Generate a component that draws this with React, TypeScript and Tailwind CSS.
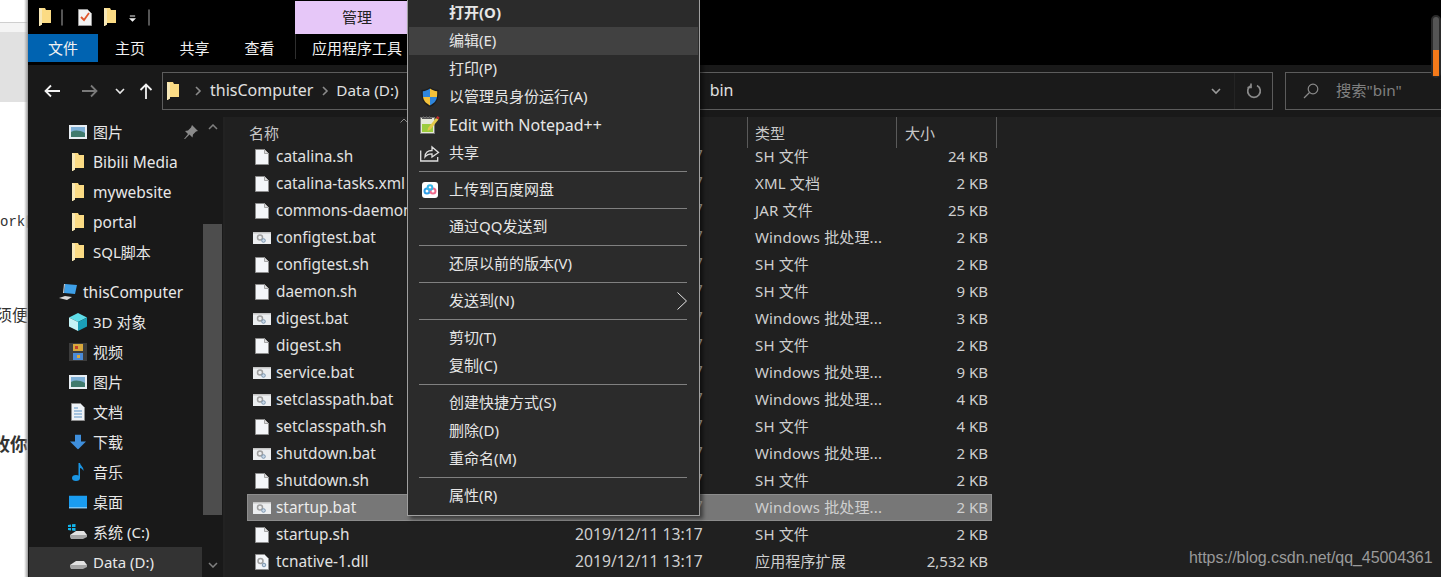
import React from "react";

const FONT = "font-['Noto_Sans','Noto_Sans_CJK_SC',sans-serif]";

function Folder({ className = "" }: { className?: string }) {
	return (
		<svg width="12" height="18" viewBox="0 0 12 18" className={className}>
			<path d="M0 0h6l1 2h5v13H3v1.500L0 18z" fill="#fbdb84" />
			<path d="M0 0l3 1v15.500L.500 18H0z" fill="#f7e8b8" />
		</svg>
	);
}

function Doc() {
	return (
		<svg width="14" height="16" viewBox="0 0 14 16" className="shrink-0">
			<path d="M.500.500h9l4 4v11h-13z" fill="#f4f6f9" stroke="#8d8d8d" />
			<path d="M9.500.500v4h4" fill="#dcdcdc" stroke="#a5a5a5" />
		</svg>
	);
}

function Bat() {
	return (
		<svg width="18" height="12" viewBox="0 0 18 12" className="-ml-px shrink-0">
			<rect width="18" height="12" fill="#eceef0" />
			<rect width="18" height="1.500" fill="#c4c4c4" />
			<circle cx="7" cy="5.500" r="2.500" fill="none" stroke="#a0a0a0" strokeWidth="1.500" />
			<circle cx="10.500" cy="8.500" r="1.800" fill="#c8d8e8" stroke="#7d97b0" />
		</svg>
	);
}

function Dll() {
	return (
		<svg width="14" height="16" viewBox="0 0 14 16" className="shrink-0">
			<path d="M.500.500h9l4 4v11h-13z" fill="#f4f6f9" stroke="#8d8d8d" />
			<circle cx="5.500" cy="7" r="2.500" fill="none" stroke="#a0a0a0" strokeWidth="1.500" />
			<circle cx="9" cy="11" r="1.800" fill="#c8d8e8" stroke="#7d97b0" />
		</svg>
	);
}

function Picture() {
	return (
		<svg width="18" height="14" viewBox="0 0 18 14">
			<rect width="18" height="14" fill="#e8eef4" />
			<rect x="2" y="2" width="14" height="10" fill="#7fb1d8" />
			<path d="M2 7c4-2 8-2 14 1v4H2z" fill="#3f7a6e" />
		</svg>
	);
}

function Film() {
	return (
		<svg width="18" height="18" viewBox="0 0 18 18">
			<rect width="18" height="18" fill="#3c3c3c" />
			<rect x="4" y="1" width="10" height="7" fill="#d8a83c" />
			<rect x="6" y="3" width="3" height="3" fill="#c0402c" />
			<rect x="4" y="10" width="10" height="7" fill="#4a8ad8" />
			<rect x="8" y="12" width="3" height="3" fill="#d8a83c" />
		</svg>
	);
}

function Cube() {
	return (
		<svg width="18" height="18" viewBox="0 0 18 18">
			<path d="M9 0l9 4.500-9 4.500-9-4.500z" fill="#5fdde8" />
			<path d="M0 4.500l9 4.500v9l-9-4.500z" fill="#c5f3f6" />
			<path d="M18 4.500l-9 4.500v9l9-4.500z" fill="#1a9fb8" />
		</svg>
	);
}

function DocList() {
	return (
		<svg width="14" height="18" viewBox="0 0 14 18">
			<path d="M.500.500h9l4 4v13h-13z" fill="#eef2f6" stroke="#8d8d8d" />
			<path d="M3 5h4M3 8h8M3 11h8M3 14h8" stroke="#5b93c7" />
		</svg>
	);
}

function DownArrow() {
	return (
		<svg width="16" height="15" viewBox="0 0 16 15">
			<path d="M5 0h6v7h5l-8 8-8-8h5z" fill="#3f8fdc" />
		</svg>
	);
}

function Note() {
	return (
		<svg width="12" height="18" viewBox="0 0 12 18">
			<ellipse cx="4" cy="15" rx="4" ry="3" fill="#1a96e4" />
			<path d="M6.500 15V0h1.500c.5 3 4 4 3.500 8-1-2-2.500-3-3.500-3v10z" fill="#1a96e4" />
		</svg>
	);
}

function Desktop() {
	return (
		<svg width="18" height="13" viewBox="0 0 18 13">
			<rect width="18" height="13" fill="#1a9cf0" />
			<rect y="12" width="18" height="1" fill="#d9eefc" />
		</svg>
	);
}

function Drive({ win }: { win?: boolean }) {
	return (
		<svg width="20" height="16" viewBox="0 0 20 16">
			<path d="M2 11l6-4h8l3 4-5 3H4z" fill="#e2e2e2" />
			<path d="M2 11h17v2l-4 2H3l-1-2z" fill="#a6a6a6" />
			{win && <path d="M0 1l3-.500V3H0zM4 .300L7.500 0v3H4zM0 4h3v2.500L0 6zM4 4h3.500v3L4 6.500z" fill="#12b4ea" />}
		</svg>
	);
}

function Monitor() {
	return (
		<svg width="20" height="18" viewBox="0 0 20 18">
			<path d="M7 1l12 1-2 9-11-1z" fill="#3ea0e8" />
			<path d="M6 1l1 0-1 9-1 0z" fill="#cfd8e0" />
			<path d="M1 15l6-2 7 1-5 3z" fill="#d9d9d9" />
		</svg>
	);
}

function Shield() {
	return (
		<svg width="18" height="20" viewBox="0 0 18 20">
			<path d="M9 0c2 2 5 3 8.500 3 0 7 0 13-8.500 17C.500 16 .500 10 .500 3 4 3 7 2 9 0z" fill="#1c1c1c" />
			<path d="M9 1.500V10H2c-.2-2 -.2-4-.2-5.800C4.500 4 7 3 9 1.500z" fill="#2f86dc" />
			<path d="M9 1.500c2 1.500 4.500 2.500 7.200 2.700 0 1.800 0 3.800-.2 5.800H9z" fill="#f3c13a" />
			<path d="M2 10h7v8.500C4.500 16 2.600 13.500 2 10z" fill="#f3c13a" />
			<path d="M9 10h7c-.6 3.500-2.500 6-7 8.500z" fill="#2f86dc" />
		</svg>
	);
}

function NotepadPlus() {
	return (
		<svg width="20" height="20" viewBox="0 0 20 20">
			<rect x="0.500" y="2.500" width="14" height="16" fill="#e6e8d8" stroke="#777" />
			<path d="M2 9h11v8H2z" fill="#9ccc3c" />
			<path d="M2 3h1v-2h1v2h2v-2h1v2h2v-2h1v2h2v1H2z" fill="#555" />
			<path d="M8 13l8-10 2.500 1.500-8 10-3 1.500z" fill="#e4c94a" />
			<path d="M16 3l1.500-2 2 1.500-1 2z" fill="#c02c2c" />
		</svg>
	);
}

function ShareIcon() {
	return (
		<svg width="20" height="18" viewBox="0 0 20 18" fill="none" stroke="#e0e0e0" strokeWidth="1.300">
			<path d="M.700 6.500v10.500h17V13" />
			<path d="M5 13c0-4.500 3-6.500 7-6.500V3l6.500 5.500L12 13V9.800c-3 0-5.500 1-7 3.200z" />
		</svg>
	);
}

function Baidu() {
	return (
		<div className="flex h-[16px] w-[16px] items-center justify-center rounded-[3px] bg-white">
			<svg width="14" height="12" viewBox="0 0 14 12" fill="none" strokeWidth="2">
				<circle cx="4" cy="7" r="2.500" stroke="#2f9ee8" />
				<circle cx="10" cy="7" r="2.500" stroke="#f06a8c" />
				<circle cx="7" cy="3.500" r="2.300" stroke="#38b6e8" />
			</svg>
		</div>
	);
}

const NAV: { label: string; icon: React.ReactNode; top?: boolean; active?: boolean; gap?: boolean; pin?: boolean; latin?: boolean }[] = [
	{ label: "图片", icon: <Picture />, pin: true },
	{ label: "Bibili Media", icon: <Folder />, latin: true },
	{ label: "mywebsite", icon: <Folder />, latin: true },
	{ label: "portal", icon: <Folder />, latin: true },
	{ label: "SQL脚本", icon: <Folder /> },
	{ label: "thisComputer", icon: <Monitor />, top: true, gap: true, latin: true },
	{ label: "3D 对象", icon: <Cube /> },
	{ label: "视频", icon: <Film /> },
	{ label: "图片", icon: <Picture /> },
	{ label: "文档", icon: <DocList /> },
	{ label: "下载", icon: <DownArrow /> },
	{ label: "音乐", icon: <Note /> },
	{ label: "桌面", icon: <Desktop /> },
	{ label: "系统 (C:)", icon: <Drive win /> },
	{ label: "Data (D:)", icon: <Drive />, active: true },
];

const BAT = "Windows 批处理...";
const FILES: [string, string, string][] = [
	["catalina.sh", "SH 文件", "24 KB"],
	["catalina-tasks.xml", "XML 文档", "2 KB"],
	["commons-daemon.jar", "JAR 文件", "25 KB"],
	["configtest.bat", BAT, "2 KB"],
	["configtest.sh", "SH 文件", "2 KB"],
	["daemon.sh", "SH 文件", "9 KB"],
	["digest.bat", BAT, "3 KB"],
	["digest.sh", "SH 文件", "2 KB"],
	["service.bat", BAT, "9 KB"],
	["setclasspath.bat", BAT, "4 KB"],
	["setclasspath.sh", "SH 文件", "4 KB"],
	["shutdown.bat", BAT, "2 KB"],
	["shutdown.sh", "SH 文件", "2 KB"],
	["startup.bat", BAT, "2 KB"],
	["startup.sh", "SH 文件", "2 KB"],
	["tcnative-1.dll", "应用程序扩展", "2,532 KB"],
];

function fileIcon(name: string) {
	if (name.endsWith(".bat")) return <Bat />;
	if (name.endsWith(".dll")) return <Dll />;
	return <Doc />;
}

type MenuEntry = { label?: string; icon?: React.ReactNode; bold?: boolean; hover?: boolean; arrow?: boolean; latin?: boolean };

const MENU: MenuEntry[] = [
	{ label: "打开(O)", bold: true },
	{ label: "编辑(E)", hover: true },
	{ label: "打印(P)" },
	{ label: "以管理员身份运行(A)", icon: <Shield /> },
	{ label: "Edit with Notepad++", icon: <NotepadPlus />, latin: true },
	{ label: "共享", icon: <ShareIcon /> },
	{},
	{ label: "上传到百度网盘", icon: <Baidu /> },
	{},
	{ label: "通过QQ发送到" },
	{},
	{ label: "还原以前的版本(V)" },
	{},
	{ label: "发送到(N)", arrow: true },
	{},
	{ label: "剪切(T)" },
	{ label: "复制(C)" },
	{},
	{ label: "创建快捷方式(S)" },
	{ label: "删除(D)" },
	{ label: "重命名(M)" },
	{},
	{ label: "属性(R)" },
];

function ContextMenu() {
	return (
		<div className="absolute left-[407px] top-[-2px] w-[293px] border border-[#a0a0a0] bg-[#2b2b2b] px-px pb-[5px] text-[15px] text-[#e6e6e6] shadow-[3px_3px_4px_rgba(0,0,0,0.5)]">
			{MENU.map((item, i) =>
				item.label ? (
					<div
						key={i}
						className={`relative flex h-[28px] items-center pb-[1px] pl-[40px] ${item.hover ? "bg-[#414141]" : ""} ${item.bold ? "font-bold" : ""} ${item.latin ? "text-[16px]" : ""}`}
					>
						{item.icon && <span className="absolute left-[10px] top-1/2 flex w-[22px] -translate-y-1/2 justify-center">{item.icon}</span>}
						{item.label}
						{item.arrow && (
							<svg width="10" height="18" viewBox="0 0 10 18" fill="none" stroke="#e8e8e8" className="absolute right-[11px] top-[5px]">
								<path d="M.500.500L9.500 9 .500 17.500" />
							</svg>
						)}
					</div>
				) : (
					<div key={i} className="py-[4px] pl-[10px] pr-[11px]">
						<div className="h-px bg-[#808080]" />
					</div>
				)
			)}
		</div>
	);
}

function PageEdge() {
	return (
		<div className="relative w-[28px] shrink-0 overflow-hidden bg-white text-[#333]">
			<div className="h-[22px]" />
			<div className="h-px bg-[#cfcfcf]" />
			<div className="h-[9px] bg-[#f4f4f4]" />
			<div className="h-[70px] bg-[#e1e1e1]" />
			<div className="h-[109px]" />
			<div className="flex h-[22px] items-center whitespace-nowrap font-['Liberation_Mono',monospace] text-[14px] leading-none">ork目</div>
			<div className="h-[71px]" />
			<div className="flex h-[22px] items-center justify-end whitespace-nowrap text-[16px]">须便</div>
			<div className="h-[107px]" />
			<div className="flex h-[22px] items-center justify-end whitespace-nowrap text-[18px] font-bold text-[#333]">收你</div>
			<div className="absolute inset-y-0 right-0 w-[4px] bg-gradient-to-r from-transparent to-[#9a9a9a]" />
		</div>
	);
}

function Ribbon() {
	return (
		<div className="h-[65px] bg-black">
			<div className="flex h-[34px] items-start">
				<div className="flex h-[34px] w-[267px] items-center">
					<Folder className="ml-[11px]" />
					<div className="ml-[10px] h-[17px] w-[2px] rounded-sm border border-[#555]" />
					<svg width="14" height="17" viewBox="0 0 14 17" className="ml-[15px]">
						<path d="M.500.500h9l4 4v12H.500z" fill="#f3f3f3" stroke="#999" />
						<path d="M3 8l3 3 5-7" fill="none" stroke="#e0562c" strokeWidth="1.800" />
					</svg>
					<Folder className="ml-[12px]" />
					<svg width="7" height="8" viewBox="0 0 8 8" className="ml-[13px] mt-[3px]">
						<path d="M1 0h6v1H1zM0 3h8L4 7z" fill="#f0f0f0" />
					</svg>
					<div className="ml-[12px] h-[17px] w-[2px] rounded-sm border border-[#555]" />
				</div>
				<div className="mt-px flex h-[33px] w-[112px] items-center justify-center bg-[#e6c7f8] pl-[12px] text-[15px] text-[#222]">管理</div>
			</div>
			<div className="flex h-[28px] items-center text-[15px] text-[#f2f2f2]">
				<div className="flex h-full w-[70px] items-center justify-center bg-[#0063b1] pt-px">文件</div>
				<div className="w-[64px] pt-px text-center">主页</div>
				<div className="w-[65px] pt-px text-center">共享</div>
				<div className="mr-[3px] w-[65px] pt-px text-center">查看</div>
				<div className="flex h-[25px] w-[112px] items-center self-start whitespace-nowrap border-l border-[#2e2e2e] pl-[16px] pt-[4px]">应用程序工具</div>
			</div>
		</div>
	);
}

function Chevron({ dir = "right", color = "#8a8a8a" }: { dir?: "right" | "down"; color?: string }) {
	return (
		<svg width="10" height="10" viewBox="0 0 10 10" fill="none" stroke={color} strokeWidth="1.600">
			<path d={dir === "right" ? "M3 1l4 4-4 4" : "M1 3l4 4 4-4"} />
		</svg>
	);
}

function AddressBar() {
	return (
		<div className="flex h-[52px] items-center bg-[#191919] text-[15px]">
			<div className="flex w-[134px] shrink-0 items-center">
				<svg width="16" height="14" viewBox="0 0 16 14" fill="none" stroke="#f2f2f2" strokeWidth="1.800" className="ml-[16px]">
					<path d="M16 7H1.500M7 1.500L1.500 7 7 12.500" />
				</svg>
				<svg width="16" height="14" viewBox="0 0 16 14" fill="none" stroke="#7a7a7a" strokeWidth="1.800" className="ml-[22px]">
					<path d="M0 7h14.500M9 1.500L14.500 7 9 12.500" />
				</svg>
				<span className="ml-[17px]">
					<Chevron dir="down" color="#e8e8e8" />
				</span>
				<svg width="14" height="16" viewBox="0 0 14 16" fill="none" stroke="#f2f2f2" strokeWidth="1.800" className="ml-[14px]">
					<path d="M7 16V1.500M1.500 7L7 1.500 12.500 7" />
				</svg>
			</div>
			<div className="flex h-[38px] w-[1111px] shrink-0 items-center border border-[#5c5c5c] bg-[#1a1a1a] text-[#e0e0e0]">
				<Folder className="ml-[4px]" />
				<span className="ml-[14px]"><Chevron /></span>
				<span className="mb-[2px] ml-[7px] text-[16px]">thisComputer</span>
				<span className="ml-[7px]"><Chevron /></span>
				<span className="mb-[2px] ml-[6px] text-[15.300px]">Data (D:)</span>
				<span className="mb-[2px] ml-[311px] text-[16px]">bin</span>
				<div className="flex-1" />
				<div className="flex h-full items-center pr-[13px]"><Chevron dir="down" color="#9a9a9a" /></div>
				<div className="flex h-full w-[38px] items-center justify-center border-l border-[#242424]">
					<svg width="16" height="16" viewBox="0 0 16 16" fill="none" stroke="#8a8a8a" strokeWidth="1.700">
						<path d="M11 2.500a6.300 6.300 0 1 1-6 0" />
						<path d="M4 0v4h-3.500" transform="translate(1 .5)" />
					</svg>
				</div>
			</div>
			<div className="ml-[12px] flex h-[38px] flex-1 items-center border-y border-l border-[#5c5c5c] bg-[#1a1a1a] text-[#808080]">
				<svg width="16" height="16" viewBox="0 0 16 16" fill="none" stroke="#8a8a8a" strokeWidth="1.200" className="ml-[17px]">
					<circle cx="10" cy="6" r="4.800" />
					<path d="M6.500 9.500L1 15" />
				</svg>
				<span className="mb-[2px] ml-[17px] text-[15.300px]">搜索"bin"</span>
			</div>
		</div>
	);
}

function Sidebar() {
	return (
		<div className="flex w-[197px] shrink-0 bg-[#191919] pl-px text-[15px] text-[#e8e8e8]">
			<div className="w-[173px] shrink-0">
				{NAV.map((n, i) => (
					<div
						key={i}
						className={`relative flex h-[30px] items-center ${n.gap ? "mt-[10px]" : ""} ${n.active ? "bg-[#333333]" : ""} ${n.top ? "pl-[54px]" : "pl-[64px]"} ${n.latin ? "pt-[2px] text-[15.500px]" : ""}`}
					>
						<span className={`absolute top-1/2 flex w-[20px] -translate-y-1/2 justify-center ${n.top ? "left-[29px]" : "left-[39px]"}`}>{n.icon}</span>
						{n.label}
						{n.pin && (
							<svg width="14" height="14" viewBox="0 0 14 14" className="absolute right-[4px] top-[8px]">
								<path d="M8 0l6 6-2 .5-3 3-.5 3-3-3L1 14l-1 0 4-5-3-3 3-.5 3-3z" fill="#8a8a8a" />
							</svg>
						)}
					</div>
				))}
			</div>
			<div className="ml-px flex w-[19px] shrink-0 flex-col items-center">
				<div className="flex h-[20px] items-center"><svg width="10" height="6" viewBox="0 0 10 6" fill="none" stroke="#808080" strokeWidth="1.500"><path d="M1 5l4-4 4 4" /></svg></div>
				<div className="h-[87px]" />
				<div className="h-[291px] w-full bg-[#4d4d4d]" />
				<div className="flex-1" />
				<div className="flex h-[24px] items-center"><svg width="10" height="6" viewBox="0 0 10 6" fill="none" stroke="#808080" strokeWidth="1.500"><path d="M1 1l4 4 4-4" /></svg></div>
			</div>
			<div className="ml-[1px] w-[3px] shrink-0 bg-[#222]" />
		</div>
	);
}

function FileList() {
	return (
		<div className="flex-1 bg-[#202020] pl-[22px] text-[15px] text-[#e2e2e2]">
			<div className="relative mb-[-5px] grid h-[31px] w-[771px] grid-cols-[328px_172px_149px_101px] text-[#c8c8c8]">
				<div className="relative pl-[2px] pt-[5px] leading-[22px]">
					名称
					<svg width="8" height="5" viewBox="0 0 8 5" fill="none" stroke="#8a8a8a" className="absolute left-[153px] top-[1px]">
						<path d="M.500 4.500L4 1l3.500 3.500" />
					</svg>
				</div>
				<div />
				<div className="border-l border-[#5a5a5a] pl-[7px] pt-[5px] leading-[22px]">类型</div>
				<div className="border-x border-[#5a5a5a] pl-[8px] pt-[5px] leading-[22px]">大小</div>
			</div>
			{FILES.map(([name, type, size]) => {
				const selected = name === "startup.bat";
				return (
					<div
						key={name}
						className={`relative grid h-[27px] w-[745px] grid-cols-[29px_299px_180px_140px_93px] items-center pr-[4px] ${selected ? "bg-[#777777] text-[#ececec] outline -outline-offset-1 outline-[#8c8c8c]" : ""}`}
					>
						<span className="flex justify-center pl-[1px]">{fileIcon(name)}</span>
						<span className="whitespace-nowrap text-[15.400px]">{name}</span>
						<span className="whitespace-nowrap text-[15.700px] text-[#cfcfcf]">2019/12/11 13:17</span>
						<span className="whitespace-nowrap tracking-[0.15px] text-[#cfcfcf]">{type}</span>
						<span className="text-right text-[#cfcfcf]">{size}</span>
					</div>
				);
			})}
		</div>
	);
}

export default function App() {
	return (
		<div className={`relative flex h-[577px] w-[1441px] overflow-hidden bg-white ${FONT}`}>
			<PageEdge />
			<div className="flex min-w-0 flex-1 flex-col">
				<Ribbon />
				<AddressBar />
				<div className="flex min-h-0 flex-1">
					<Sidebar />
					<FileList />
				</div>
			</div>
			<ContextMenu />
			<div className="absolute left-[1431px] top-[15px] flex h-[63px] w-[10px] flex-col justify-end rounded-full border-2 border-[#2a2a2a] bg-[#555]">
				<div className="h-[26px] bg-[#f47a1a]" />
			</div>
			<div className="absolute left-[1189px] top-[548px] font-['Liberation_Sans',sans-serif] text-[16px] leading-[20px] tracking-[-0.06px] text-[#9a9a9a]">
				https://blog.csdn.net/qq_45004361
			</div>
		</div>
	);
}
